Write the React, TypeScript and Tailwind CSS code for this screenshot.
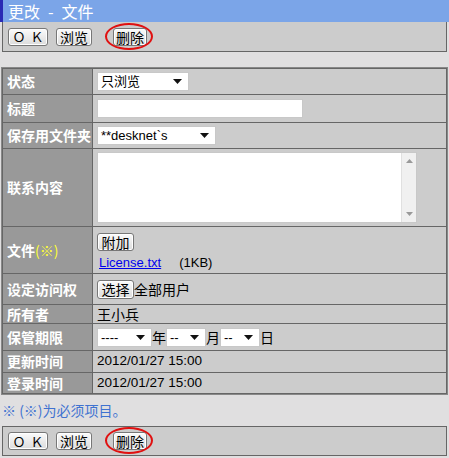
import React from "react";

const font = "font-['Noto_Sans_CJK_SC','Noto_Sans',sans-serif]";
const latin = "font-['Liberation_Sans','Noto_Sans_CJK_SC',sans-serif]";

const btnCls = `h-[18px] shrink-0 whitespace-nowrap flex items-center justify-center border border-[#777] rounded-[3px] bg-gradient-to-b from-[#fbfbfb] to-[#dcdcdc] text-[14px] leading-none text-black shadow-[inset_0_0_0_1px_#fff] ${font}`;

function Btn({ children, w }: { children: React.ReactNode; w: string }) {
  return <div className={`${btnCls} ${w}`}>{children}</div>;
}

function Arrow() {
  return (
    <svg width="9" height="5" viewBox="0 0 9 5" className="shrink-0">
      <path d="M0 0h9L4.5 5z" fill="#111" />
    </svg>
  );
}

function Select({ label, w }: { label: string; w: string }) {
  return (
    <div
      className={`h-[19px] ${w} shrink-0 flex items-center justify-between pl-[3px] pr-[6px] bg-white border border-[#c8c8c8] text-[13px] text-black ${latin}`}
    >
      <span className="leading-none whitespace-nowrap">{label}</span>
      <Arrow />
    </div>
  );
}

function ButtonBar({ top }: { top?: boolean }) {
  return (
    <div
      className={`mx-[2px] h-[30px] border-x border-b ${top ? "border-t" : ""} border-[#666] bg-[#cccccc] flex items-center pl-[5px] gap-[8px]`}
    >
      <Btn w="w-[40px]">
        <span className="tracking-[5px] pl-[5px] text-[13px]">ＯＫ</span>
      </Btn>
      <Btn w="w-[36px]">浏览</Btn>
      <div className="relative ml-[13px]">
        <Btn w="w-[34px]">删除</Btn>
        <div className="absolute left-[-8px] top-[-5px] w-[48px] h-[27px] rounded-[50%] border-[2.5px] border-[#e01010]" />
      </div>
    </div>
  );
}

function Row({
  label,
  h,
  children,
  last,
}: {
  label: React.ReactNode;
  h: string;
  children?: React.ReactNode;
  last?: boolean;
}) {
  return (
    <div className={`flex ${h} ${last ? "" : "border-b border-[#666]"}`}>
      <div
        className={`w-[90px] shrink-0 bg-[#999999] border-r border-[#666] flex items-center pl-[4px] text-[14px] font-bold text-white whitespace-nowrap ${font}`}
      >
        {label}
      </div>
      <div className={`flex-1 bg-[#cccccc] flex items-center pl-[4px] text-[13px] text-black ${font}`}>
        {children}
      </div>
    </div>
  );
}

export default function App() {
  return (
    <div className={`w-[449px] h-[458px] bg-[#e0dfe0] ${font}`}>
      <div className="h-[22px] bg-[#7ba5e8] border-l-[3px] border-[#2a2ab4] flex items-center pl-[5px] text-[16px] text-white leading-none">
        更改<span className="mx-[8px]">-</span>文件
      </div>
      <ButtonBar />

      <div className="mx-[2px] mt-[16px] border border-[#666] outline outline-1 outline-[#888]">
        <Row label="状态" h="h-[26px]">
          <Select label="只浏览" w="w-[92px]" />
        </Row>
        <Row label="标题" h="h-[28px]">
          <div className="h-[19px] w-[206px] bg-white border border-[#c8c8c8]" />
        </Row>
        <Row label="保存用文件夹" h="h-[26px]">
          <Select label="**desknet`s" w="w-[119px]" />
        </Row>
        <Row label="联系内容" h="h-[78px]">
          <div className="h-[71px] w-[320px] bg-white border border-[#c8c8c8] flex justify-end">
            <div className="w-[15px] bg-[#f0f0f0] border-l border-[#e0e0e0] flex flex-col items-center justify-between py-[6px]">
              <svg width="7" height="4" viewBox="0 0 7 4">
                <path d="M0 4h7L3.5 0z" fill="#999" />
              </svg>
              <svg width="7" height="4" viewBox="0 0 7 4">
                <path d="M0 0h7L3.5 4z" fill="#999" />
              </svg>
            </div>
          </div>
        </Row>
        <Row
          label={
            <span>
              文件<span className="text-[#ffff33] font-normal">(※)</span>
            </span>
          }
          h="h-[47px]"
        >
          <div className="flex flex-col gap-[5px] pt-[1px]">
            <Btn w="w-[37px]">附加</Btn>
            <div className={`flex items-center text-[13px] leading-none ${latin}`}>
              <span className="text-[#0000ee] underline ml-[2px]">License.txt</span>
              <span className="ml-[18px]">(1KB)</span>
            </div>
          </div>
        </Row>
        <Row label="设定访问权" h="h-[31px]">
          <div className="flex items-center">
            <Btn w="w-[37px] h-[19px]">选择</Btn>
            <span className="text-[14px]">全部用户</span>
          </div>
        </Row>
        <Row label="所有者" h="h-[19px]">
          <span className="text-[14px]">王小兵</span>
        </Row>
        <Row label="保管期限" h="h-[27px]">
          <div className="flex items-center text-[14px]">
            <Select label="----" w="w-[55px]" />
            <span>年</span>
            <Select label="--" w="w-[40px]" />
            <span>月</span>
            <Select label="--" w="w-[40px]" />
            <span>日</span>
          </div>
        </Row>
        <Row label="更新时间" h="h-[22px]">
          <span className={`${latin} text-[13.5px]`}>2012/01/27 15:00</span>
        </Row>
        <Row label="登录时间" h="h-[20px]" last>
          <span className={`${latin} text-[13.5px]`}>2012/01/27 15:00</span>
        </Row>
      </div>

      <div className="h-[32px] flex items-center pl-[2px] text-[14px] text-[#3f72d0]">
        ※ (※)为必须项目。
      </div>
      <ButtonBar top />
    </div>
  );
}
